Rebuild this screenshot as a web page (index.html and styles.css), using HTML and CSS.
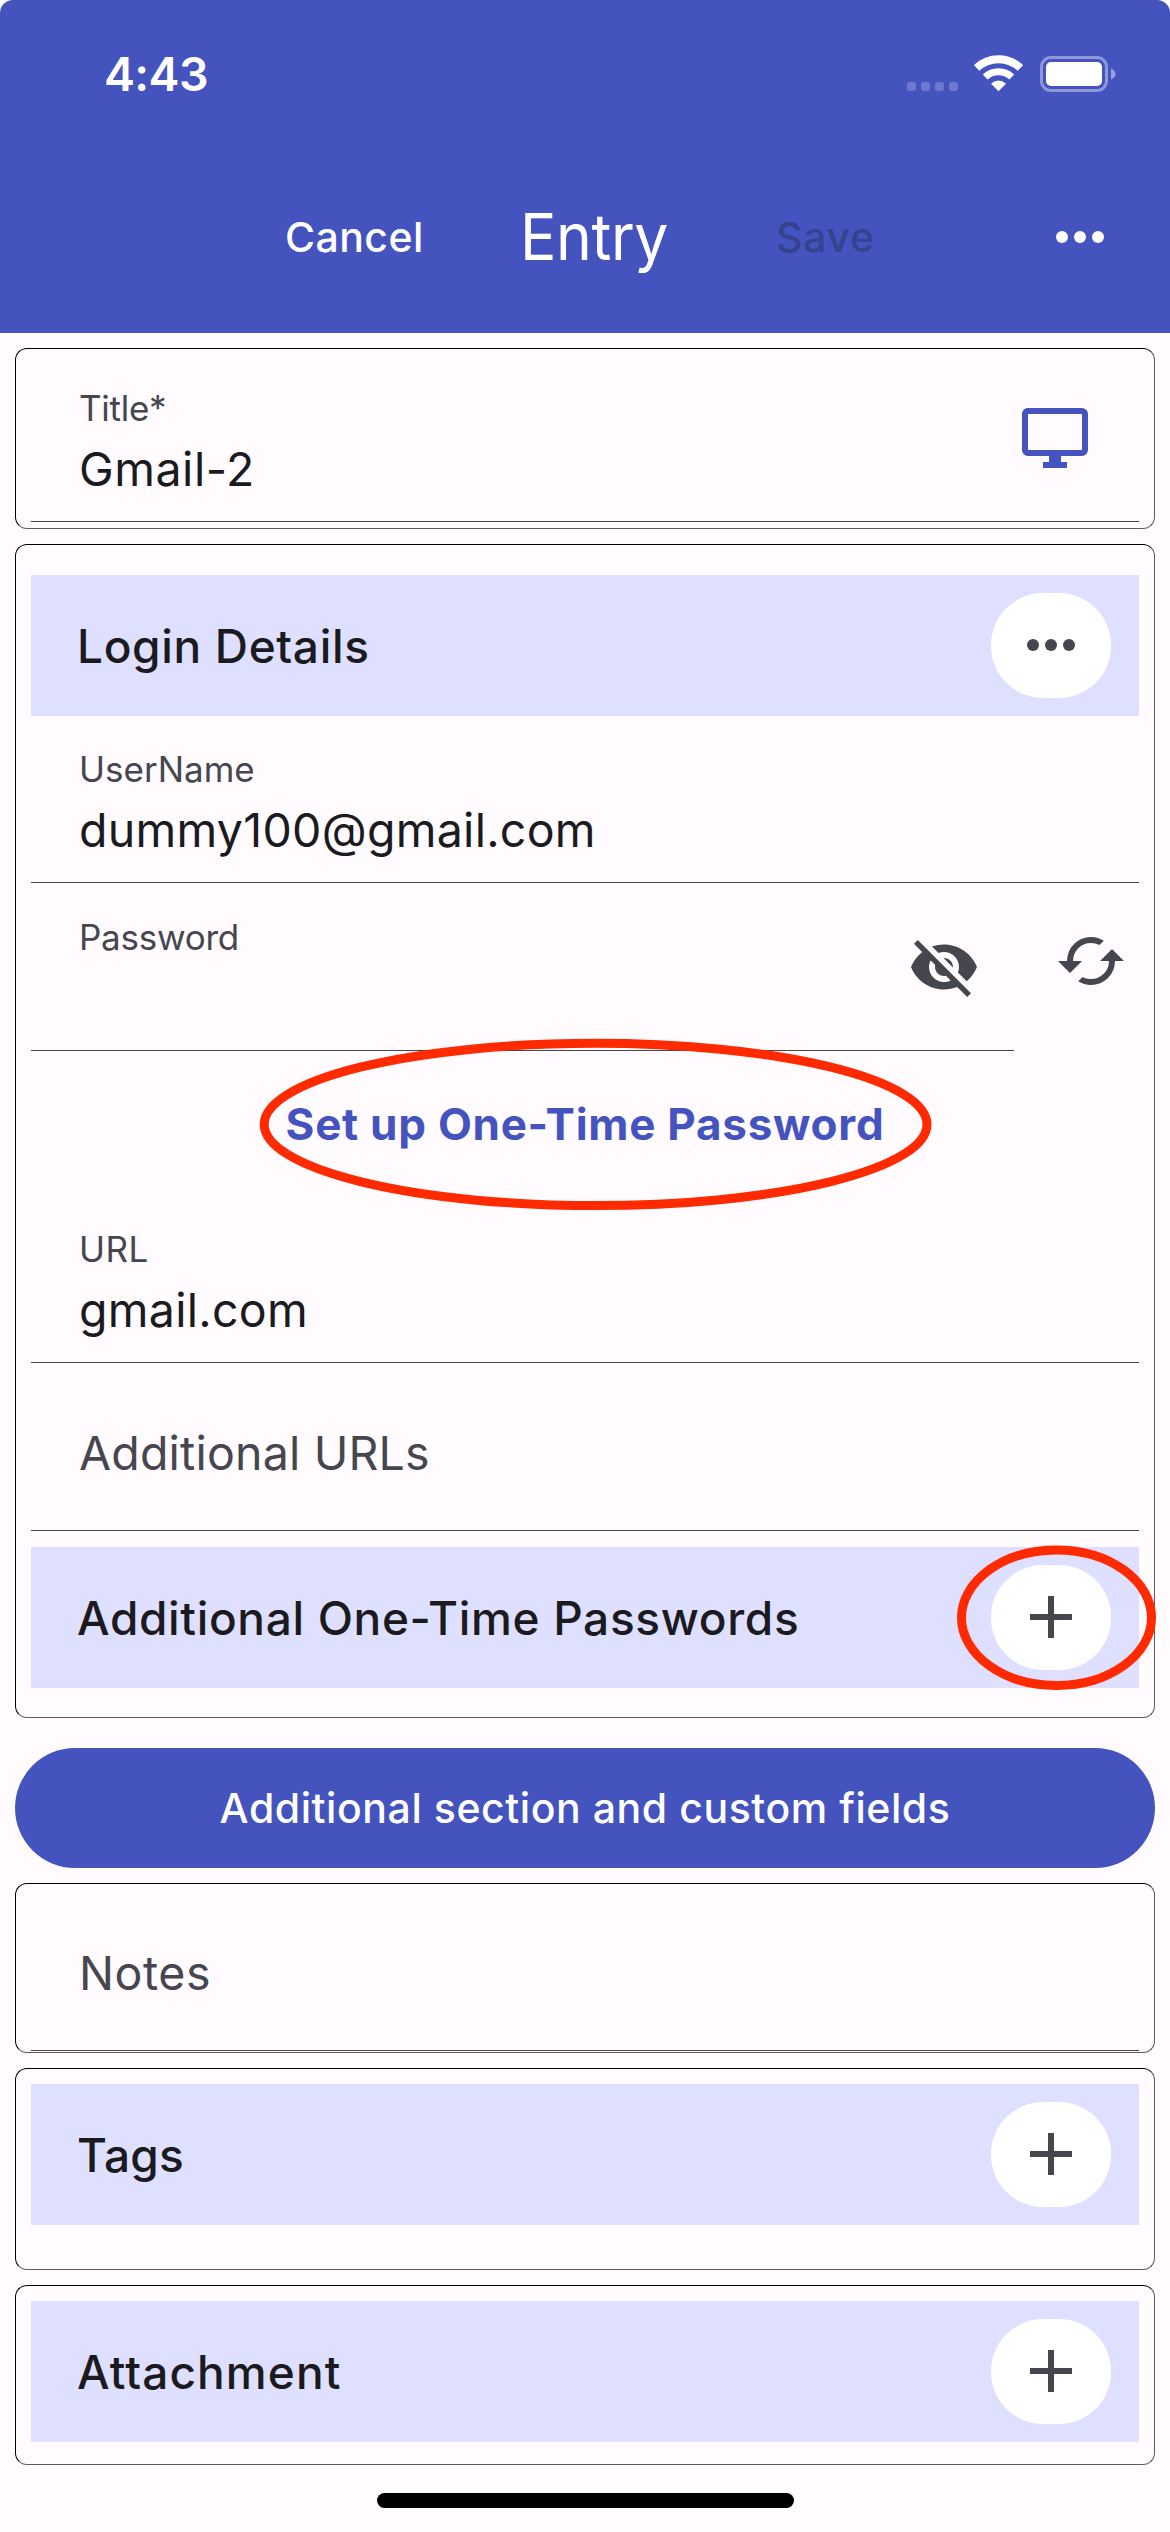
FILE: index.html
```html
<!DOCTYPE html>
<html lang="en">
<head>
<meta charset="utf-8">
<title>Entry</title>
<link rel="stylesheet" href="styles.css">
</head>
<body>
<svg class="defs" width="0" height="0" aria-hidden="true">
  <symbol id="dots" viewBox="0 0 48 12"><circle cx="6" cy="6" r="6"/><circle cx="24" cy="6" r="6"/><circle cx="42" cy="6" r="6"/></symbol>
  <symbol id="plus" viewBox="0 0 42 42"><path d="M18 0h6v18h18v6H24v18h-6V24H0v-6h18z"/></symbol>
</svg>
<div class="screen">
  <header class="header">
    <div class="status">
      <span class="time">4:43</span>
      <div class="status-icons">
        <svg class="cell" width="51" height="9" viewBox="0 0 51 9"><rect width="9" height="9" rx="3"/><rect x="14" width="9" height="9" rx="3"/><rect x="28" width="9" height="9" rx="3"/><rect x="42" width="9" height="9" rx="3"/></svg>
        <svg class="wifi" width="49" height="36" viewBox="0 0 49 36">
          <path class="arc" stroke-width="8" d="M2.6 12.95A31.8 31.8 0 0 1 46.4 12.95"/>
          <path class="arc" stroke-width="7" d="M11.2 22A19.3 19.3 0 0 1 37.8 22"/>
          <path class="wedge" d="M18 28.7a9.8 9.8 0 0 1 13 0L24.5 35.2z"/>
        </svg>
        <svg class="battery" width="76" height="36" viewBox="0 0 76 36">
          <rect class="shell" x="1.5" y="1.5" width="65" height="33" rx="9.5"/>
          <rect class="charge" x="6" y="6" width="56" height="24" rx="5"/>
          <path class="nub" d="M71 12.5c2.7 1 4.5 3.100 4.500 5.500s-1.800 4.500-4.500 5.500z"/>
        </svg>
      </div>
    </div>
    <nav class="nav">
      <span class="action">Cancel</span>
      <h1 class="heading">Entry</h1>
      <span class="action disabled">Save</span>
      <svg class="more" width="48" height="12"><use href="#dots"/></svg>
    </nav>
  </header>

  <main class="content">
    <section class="card card-title">
      <div class="field has-icon">
        <div class="field-text"><span class="label title-label">Title*</span><span class="value wide">Gmail-2</span></div>
        <svg class="icon monitor" viewBox="0 0 24 24"><path d="M21 16H3V4h18m0-2H3c-1.110 0-2 .890-2 2v12a2 2 0 0 0 2 2h7v2H8v2h8v-2h-2v-2h7a2 2 0 0 0 2-2V4a2 2 0 0 0-2-2z"/></svg>
      </div>
    </section>

    <section class="card card-login">
      <div class="band">
        <h2>Login Details</h2>
        <span class="pill"><svg width="48" height="12"><use href="#dots"/></svg></span>
      </div>
      <div class="field after-band">
        <div class="field-text"><span class="label">UserName</span><span class="value">dummy100@gmail.com</span></div>
      </div>
      <div class="password-row">
        <div class="field has-icon password">
          <div class="field-text"><span class="label password-label">Password</span></div>
          <svg class="icon eye" viewBox="0 0 24 24"><path d="M12 7c2.760 0 5 2.240 5 5 0 .65-.13 1.260-.36 1.830l2.920 2.920c1.510-1.260 2.700-2.890 3.430-4.750-1.730-4.390-6-7.500-11-7.500-1.400 0-2.740.25-3.980.7l2.160 2.160C10.740 7.130 11.350 7 12 7zM2 4.270l2.280 2.280.46.46C3.080 8.300 1.780 10.020 1 12c1.730 4.390 6 7.500 11 7.500 1.550 0 3.030-.3 4.380-.84l.42.42L19.730 22 21 20.730 3.270 3 2 4.270zM7.530 9.800l1.550 1.550c-.05.21-.08.43-.08.65 0 1.660 1.340 3 3 3 .22 0 .44-.03.65-.08l1.550 1.550c-.67.33-1.410.53-2.200.53-2.760 0-5-2.240-5-5 0-.79.2-1.530.53-2.200zm4.310-.78l3.150 3.150.02-.16c0-1.660-1.340-3-3-3l-.17.01z"/></svg>
        </div>
        <svg class="icon sync" viewBox="0 0 24 24"><path d="M19 8l-4 4h3a6 6 0 0 1-6 6c-1 0-1.970-.25-2.800-.7l-1.460 1.460C8.970 19.540 10.430 20 12 20a8 8 0 0 0 8-8h3M6 12a6 6 0 0 1 6-6c1 0 1.970.25 2.800.7l1.460-1.460C15.030 4.460 13.570 4 12 4a8 8 0 0 0-8 8H1l4 4 4-4"/></svg>
      </div>
      <div class="otp"><span>Set up One-Time Password</span></div>
      <div class="field">
        <div class="field-text"><span class="label url-label">URL</span><span class="value">gmail.com</span></div>
      </div>
      <div class="field empty"><span class="placeholder">Additional URLs</span></div>
      <div class="band spaced">
        <h2>Additional One-Time Passwords</h2>
        <span class="pill"><svg width="42" height="42"><use href="#plus"/></svg></span>
      </div>
    </section>

    <div class="button">Additional section and custom fields</div>

    <section class="card card-notes">
      <div class="field empty short"><span class="placeholder notes">Notes</span></div>
    </section>

    <section class="card card-tags">
      <div class="band">
        <h2 class="tags">Tags</h2>
        <span class="pill"><svg width="42" height="42"><use href="#plus"/></svg></span>
      </div>
    </section>

    <section class="card card-attachment">
      <div class="band">
        <h2 class="attachment">Attachment</h2>
        <span class="pill"><svg width="42" height="42"><use href="#plus"/></svg></span>
      </div>
    </section>
  </main>
  <div class="home-indicator"></div>

  <svg class="marks" width="1170" height="2532" viewBox="0 0 1170 2532">
    <ellipse cx="595.6" cy="1124.4" rx="331.4" ry="81.2"/>
    <ellipse cx="1056.5" cy="1617.7" rx="95" ry="67.8"/>
  </svg>
</div>
</body>
</html>
```
FILE: styles.css
```css
* { box-sizing: border-box; }

body {
  margin: 0;
  background: #fff;
  font-family: Inter, "Liberation Sans", sans-serif;
}

.defs { position: absolute; }

svg { display: block; flex: none; }

.screen {
  position: relative;
  width: 1170px;
  height: 2532px;
  overflow: hidden;
  border-radius: 13px 13px 0 0;
  background: #fffbff;
  color: #1b1b1f;
}

/* Header */
.header {
  height: 333px;
  background: #4553bf;
  color: #fff;
  fill: #fff;
}

.status {
  display: flex;
  justify-content: space-between;
  height: 141px;
  padding: 46px 54px 0 104px;
}

.time {
  font-size: 46.5px;
  font-weight: 600;
  line-height: 56px;
  letter-spacing: -0.6px;
}

.status-icons { display: flex; align-items: flex-start; }
.cell { margin: 36px 16px 0 0; opacity: 0.22; }
.wifi { margin: 9px 17px 0 0; }
.arc { fill: none; stroke: #fff; }
.wedge { stroke: #fff; stroke-width: 1.4; stroke-linejoin: round; }
.battery { margin-top: 10px; }
.shell { fill: none; stroke: #fff; stroke-width: 3; opacity: 0.4; }
.nub { opacity: 0.45; }

.nav {
  display: grid;
  grid-template-columns: 235px 256px 1fr auto;
  align-items: center;
  height: 192px;
  padding: 0 66px 0 285px;
}

.action {
  font-size: 41px;
  font-weight: 500;
  line-height: 50px;
  letter-spacing: 0.45px;
}

.disabled { color: #36418f; letter-spacing: 0.7px; }

.heading {
  margin: 0;
  font-size: 64.5px;
  font-weight: 400;
  line-height: 80px;
  letter-spacing: -0.4px;
  transform: scaleX(0.94);
  transform-origin: left;
}

/* Cards */
.content { padding: 15px 15px 0; }

.card {
  margin-bottom: 15px;
  padding: 0 15px;
  border: 1px solid #000;
  border-right-color: #5d5a60;
  border-bottom-color: #5d5a60;
  border-radius: 12px;
}

.card-title { padding-top: 5px; padding-bottom: 6px; }
.card-login { padding-top: 30px; padding-bottom: 29px; margin-bottom: 30px; }
.card-notes { padding-bottom: 1px; }
.card-tags { padding-top: 15px; padding-bottom: 44px; }
.card-attachment { padding-top: 15px; padding-bottom: 22px; }

.band {
  display: flex;
  align-items: center;
  justify-content: space-between;
  height: 141px;
  padding: 0 28px 0 46px;
  background: #dfe0ff;
}

.band.spaced { margin-top: 16px; }

.band h2 {
  margin: 0;
  padding-top: 1px;
  font-size: 46px;
  font-weight: 500;
  line-height: 56px;
  letter-spacing: 0.66px;
}

.band .tags { letter-spacing: 0.25px; }
.band .attachment { letter-spacing: 1.1px; }

.pill {
  display: flex;
  align-items: center;
  justify-content: center;
  width: 120px;
  height: 105px;
  padding-bottom: 1px;
  border-radius: 52px;
  background: #fff;
  fill: #46464f;
}

/* Fields */
.field {
  display: flex;
  justify-content: space-between;
  height: 168px;
  padding: 32px 48px 0 48px;
  border-bottom: 1px solid #46464f;
}

.field.after-band { height: 167px; padding-top: 31px; }
.field-text { display: flex; flex-direction: column; gap: 11px; }

.label {
  color: #46464f;
  font-size: 35px;
  line-height: 44px;
}

.title-label { letter-spacing: -0.28px; }
.password-label { letter-spacing: -0.25px; }
.url-label { letter-spacing: 0.47px; }

.value {
  font-size: 46.5px;
  line-height: 56px;
  letter-spacing: 0.28px;
}

.value.wide { letter-spacing: 0.52px; }

.field.empty { align-items: center; padding-top: 13px; }
.field.short { height: 168px; margin-top: -1px; }

.placeholder {
  color: #46464f;
  font-size: 46.5px;
  line-height: 56px;
  letter-spacing: 0.19px;
}

.placeholder.notes { letter-spacing: 0.55px; }

.icon { width: 72px; height: 72px; fill: #46464f; }
.monitor { margin-top: 16px; fill: #4553bf; }

.password-row { display: flex; justify-content: space-between; }
.password { width: 983px; padding-right: 34px; }
.eye { margin-top: 16px; }
.sync { margin: 42px 12px 0 0; }

.otp {
  display: flex;
  align-items: center;
  justify-content: center;
  height: 144px;
  padding-top: 2px;
  color: #4553bf;
  font-size: 44px;
  font-weight: 700;
  line-height: 56px;
  letter-spacing: 0.74px;
}

.button {
  display: flex;
  align-items: center;
  justify-content: center;
  height: 120px;
  margin-bottom: 15px;
  border-radius: 60px;
  background: #4553bf;
  color: #fff;
  font-size: 41px;
  font-weight: 500;
  letter-spacing: 0.56px;
}

.home-indicator {
  width: 417px;
  height: 15px;
  margin: 28px auto 0;
  border-radius: 8px;
  background: #000;
}

/* Hand-drawn highlight rings over the form */
.marks {
  position: absolute;
  top: 0;
  left: 0;
  fill: none;
  stroke: #ff2a00;
  stroke-width: 9px;
}
```
